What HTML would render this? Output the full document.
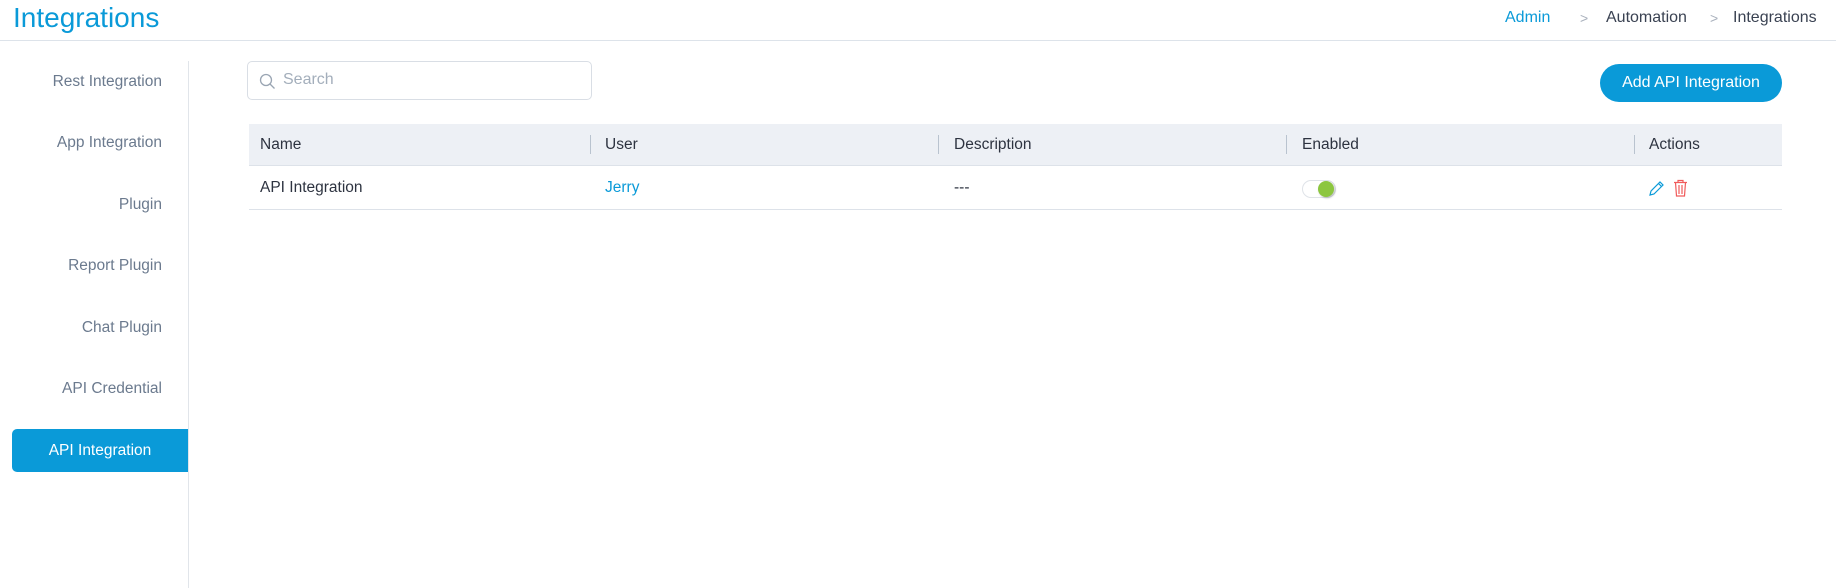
<!DOCTYPE html>
<html><head><meta charset="utf-8"><style>
*{box-sizing:border-box;margin:0;padding:0}
body{width:1836px;height:588px;background:#fff;font-family:"Liberation Sans",sans-serif;position:relative;overflow:hidden;color:#2d3340}
.a{position:absolute;white-space:nowrap}
.title{left:13px;top:2px;font-size:28px;color:#0a9ad8}
.hdr{left:0;top:40px;width:1836px;height:1px;background:#dde3ea}
.bc{top:9px;font-size:16px;color:#3a4252}
.chev{top:10px;font-size:14px;color:#a8b0bc}
.side{left:188px;top:61px;width:1px;height:527px;background:#e1e5ea}
.si{right:1674px;font-size:15.5px;color:#6b7a8e;transform:translateY(-50%)}
.act{left:12px;top:429px;width:176px;height:43px;background:#0a9ad8;border-radius:5px 0 0 5px;color:#fff;font-size:15.5px;text-align:center;line-height:43px}
.search{left:247px;top:61px;width:345px;height:39px;border:1px solid #d9dee5;border-radius:5px}
.btn{left:1600px;top:64px;width:182px;height:38px;background:#0a9ad8;border-radius:19px;color:#fff;font-size:16px;text-align:center;line-height:38px}
.th{left:249px;top:124px;width:1533px;height:42px;background:#edf0f5;border-bottom:1px solid #dde2e9}
.rowb{left:249px;top:209px;width:1533px;height:1px;background:#dde2e9}
.h{top:145px;transform:translateY(-50%);font-size:15.5px;color:#2d3340}
.sep{top:135px;width:1px;height:19px;background:#b9c3cf}
.c{top:188px;transform:translateY(-50%);font-size:15.5px}
</style></head><body>
<div class="a title">Integrations</div>
<div class="a hdr"></div>
<div class="a bc" style="left:1505px;color:#0a9ad8">Admin</div>
<div class="a chev" style="left:1580px">&gt;</div>
<div class="a bc" style="left:1606px">Automation</div>
<div class="a chev" style="left:1710px">&gt;</div>
<div class="a bc" style="left:1733px">Integrations</div>
<div class="a side"></div>
<div class="a si" style="top:82px">Rest Integration</div>
<div class="a si" style="top:143px">App Integration</div>
<div class="a si" style="top:205px">Plugin</div>
<div class="a si" style="top:266px">Report Plugin</div>
<div class="a si" style="top:328px">Chat Plugin</div>
<div class="a si" style="top:389px">API Credential</div>
<div class="a act">API Integration</div>
<div class="a search"></div>
<svg class="a" style="left:259px;top:73px" width="17" height="17" viewBox="0 0 17 17"><circle cx="7" cy="7" r="5.5" fill="none" stroke="#9aa5b3" stroke-width="1.3"/><line x1="11" y1="11" x2="15.5" y2="15.5" stroke="#9aa5b3" stroke-width="1.3"/></svg>
<div class="a" style="left:283px;top:71px;font-size:16px;color:#a3aebb">Search</div>
<div class="a btn">Add API Integration</div>
<div class="a th"></div>
<div class="a h" style="left:260px">Name</div>
<div class="a sep" style="left:590px"></div><div class="a h" style="left:605px">User</div>
<div class="a sep" style="left:938px"></div><div class="a h" style="left:954px">Description</div>
<div class="a sep" style="left:1286px"></div><div class="a h" style="left:1302px">Enabled</div>
<div class="a sep" style="left:1634px"></div><div class="a h" style="left:1649px">Actions</div>
<div class="a rowb"></div>
<div class="a c" style="left:260px">API Integration</div>
<div class="a c" style="left:605px;color:#0a9ad8">Jerry</div>
<div class="a c" style="left:954px">---</div>
<div class="a" style="left:1302px;top:180px;width:34px;height:18px;border:1px solid #dfe3e8;border-radius:9px;background:#fff"></div>
<div class="a" style="left:1318px;top:181px;width:16px;height:16px;border-radius:50%;background:#8cc63f;box-shadow:1px 1px 2px rgba(0,0,0,.25)"></div>
<svg class="a" style="left:1648px;top:180px" width="16" height="17" viewBox="0 0 16 17"><path d="M2 15 L3 11 L12 2 L15 5 L6 14 Z M10.5 3.5 L13.5 6.5" fill="none" stroke="#0a9ad8" stroke-width="1.2"/></svg>
<svg class="a" style="left:1673px;top:179px" width="15" height="18" viewBox="0 0 15 18"><path d="M1 3.5 H14 M5 3.5 V1.5 H10 V3.5 M2.5 3.5 L3.5 17 H11.5 L12.5 3.5 M6 6 V15 M9 6 V15" fill="none" stroke="#f05a5a" stroke-width="1.2"/></svg>
</body></html>
